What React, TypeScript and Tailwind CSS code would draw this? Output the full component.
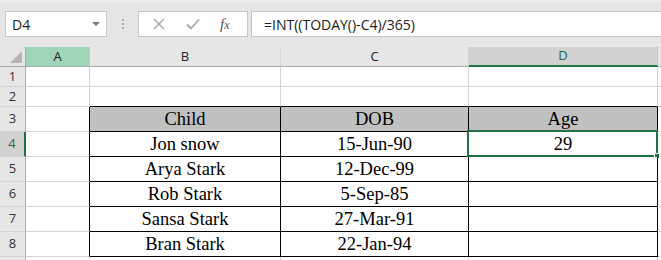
const ui = { fontFamily: '"Open Sans", "Noto Sans", sans-serif' }
const serif = { fontFamily: '"Liberation Serif", "Times New Roman", serif' }

const colWidths = ["w-[64px]", "w-[191px]", "w-[188px]", "w-[189px]"]

const rows = [
  { n: 1, h: "h-[20px]", cells: ["", "", "", ""] },
  { n: 2, h: "h-[20px]", cells: ["", "", "", ""] },
  { n: 3, h: "h-[25px]", cells: ["", "Child", "DOB", "Age"] },
  { n: 4, h: "h-[25px]", cells: ["", "Jon snow", "15-Jun-90", "29"] },
  { n: 5, h: "h-[25px]", cells: ["", "Arya Stark", "12-Dec-99", ""] },
  { n: 6, h: "h-[25px]", cells: ["", "Rob Stark", "5-Sep-85", ""] },
  { n: 7, h: "h-[25px]", cells: ["", "Sansa Stark", "27-Mar-91", ""] },
  { n: 8, h: "h-[25px]", cells: ["", "Bran Stark", "22-Jan-94", ""] },
  // only the top edge of row 9 shows, so no label
  { n: 9, h: "h-[25px]", cells: ["", "", "", ""] },
]

function FormulaBar() {
  return (
    <div className="h-[47px] bg-[#e6e6e6] border-t-[3px] border-[#ececec] flex items-start pt-[8px] pl-[5px]" style={ui}>
      {/* name box */}
      <div className="w-[102px] h-[26px] bg-white border border-[#c6c6c6] flex items-center justify-between pl-[6px] pr-[5px]">
        <span className="text-[14px] text-[#222]">D4</span>
        <svg width="10" height="6" viewBox="0 0 10 6">
          <path d="M1 1h8L5 5z" fill="#7a7a7a" />
        </svg>
      </div>
      <div className="w-[31px] h-[26px] flex flex-col items-center justify-center gap-[2px]">
        <div className="w-[2px] h-[2px] bg-[#a6a6a6]" />
        <div className="w-[2px] h-[2px] bg-[#a6a6a6]" />
        <div className="w-[2px] h-[2px] bg-[#a6a6a6]" />
      </div>
      {/* x / check / fx */}
      <div className="w-[110px] h-[26px] bg-white border border-[#c6c6c6] flex items-center">
        <svg className="ml-[14px]" width="12" height="12" viewBox="0 0 12 12">
          <path d="M1 1l10 10M11 1L1 11" stroke="#a8a8a8" strokeWidth="1.4" />
        </svg>
        <svg className="ml-[21px]" width="14" height="12" viewBox="0 0 14 12">
          <path d="M1 6.5l4 4L13 1.5" stroke="#a8a8a8" strokeWidth="1.8" fill="none" />
        </svg>
        <span className="ml-[20px] text-[15px] italic text-[#555] leading-none" style={serif}>
          f<span className="text-[12px]">x</span>
        </span>
      </div>
      <div className="flex-1 ml-[3px] h-[26px] bg-white border border-[#c6c6c6] border-r-0 flex items-center pl-[12px]">
        <span className="text-[14px] text-[#222]">=INT((TODAY()-C4)/365)</span>
      </div>
    </div>
  )
}

function ColumnHeaders() {
  const cols = [
    { label: "A", cls: "bg-[#9fd5b7] border-r-[#c6c6c6] border-b-[#ababab] text-[#222]" },
    { label: "B", cls: "bg-[#e6e6e6] border-r-[#d4d4d4] border-b-[#ababab] text-[#222]" },
    { label: "C", cls: "bg-[#e6e6e6] border-r-[#d4d4d4] border-b-[#ababab] text-[#222]" },
    { label: "D", cls: "bg-[#d2d2d2] border-r-[#c6c6c6] border-b-[#217346] border-b-2 text-[#1e6b40]" },
  ]
  return (
    <div className="flex h-[20px]" style={ui}>
      <div className="w-[26px] bg-[#e6e6e6] border-r border-b border-[#ababab] flex items-end justify-end pr-[3px] pb-[3px]">
        <svg width="12" height="12" viewBox="0 0 12 12">
          <path d="M12 0V12H0z" fill="#b5b5b5" />
        </svg>
      </div>
      {cols.map((c, i) => (
        <div
          key={c.label}
          className={`${colWidths[i]} border-r border-b flex items-center justify-center text-[13px] ${c.cls}`}
        >
          {c.label}
        </div>
      ))}
      <div className="flex-1 bg-[#e6e6e6] border-b border-[#ababab]" />
    </div>
  )
}

function Row({ n, h, cells }: { n: number; h: string; cells: string[] }) {
  const inTable = n >= 3 && n <= 8
  const selected = n === 4
  return (
    <div className={`flex ${h}`}>
      <div
        className={`w-[26px] border-b border-[#d4d4d4] flex items-center justify-center text-[13px] ${
          selected
            ? "bg-[#d2d2d2] border-r-2 border-r-[#217346] text-[#1e6b40]"
            : "bg-[#e6e6e6] border-r border-r-[#ababab] text-[#333]"
        }`}
        style={ui}
      >
        {n < 9 ? n : ""}
      </div>
      {cells.map((text, i) => {
        const tableCol = i >= 1
        const right =
          (i === 0 && inTable) || (tableCol && inTable) ? "border-r-black" : "border-r-[#d4d4d4]"
        const bottom =
          tableCol && (inTable || n === 2) ? "border-b-black" : "border-b-[#d4d4d4]"
        const bg = n === 3 && tableCol ? "bg-[#c0c0c0]" : "bg-white"
        return (
          <div
            key={i}
            className={`relative ${colWidths[i]} border-r border-b ${right} ${bottom} ${bg} flex items-end justify-center pb-[1px] text-[18.5px] leading-[22px] text-black`}
            style={serif}
          >
            {text}
            {selected && i === 3 && (
              <div className="absolute -left-[2px] -top-[2px] -right-[1px] -bottom-[1px] border-2 border-[#217346] pointer-events-none">
                <div className="absolute -right-[4px] -bottom-[4px] w-[6px] h-[6px] bg-[#217346] border border-white" />
              </div>
            )}
          </div>
        )
      })}
      <div className="flex-1 bg-white border-b border-[#d4d4d4]" />
    </div>
  )
}

export default function App() {
  return (
    <div className="w-[661px] h-[260px] overflow-hidden bg-white">
      <FormulaBar />
      <ColumnHeaders />
      {rows.map((r) => (
        <Row key={r.n} {...r} />
      ))}
    </div>
  )
}
